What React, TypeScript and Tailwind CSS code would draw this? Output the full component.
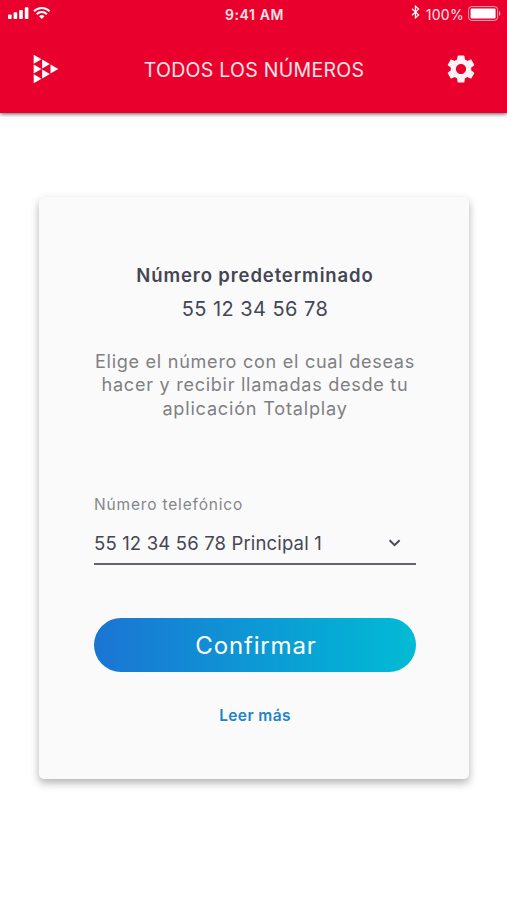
import { MdSettings } from "react-icons/md";

const DESCRIPTION = [
  { text: "Elige el número con el cual deseas", tracking: "tracking-[0.71px]" },
  { text: "hacer y recibir llamadas desde tu", tracking: "tracking-[0.71px]" },
  { text: "aplicación Totalplay", tracking: "tracking-[0.8px]" },
];

function StatusBar() {
  return (
    <div className="grid h-7 grid-cols-3 items-center pl-[8px] pr-[6px]">
      <svg width="44" height="14" viewBox="0 0 44 14" fill="#fff">
        <rect x="0" y="7.5" width="3.6" height="4.5" rx="0.8" />
        <rect x="5.6" y="5.2" width="3.6" height="6.8" rx="0.8" />
        <rect x="11.2" y="3" width="3.6" height="9" rx="0.8" />
        <rect x="16.8" y="0.3" width="3.6" height="11.7" rx="0.8" />
        <g fill="none" stroke="#fff" strokeWidth="2">
          <path d="M26 4.3a11 11 0 0 1 15.6 0" />
          <path d="M28.7 7.2a7.2 7.2 0 0 1 10.2 0" />
        </g>
        <path d="M33.8 12.1l-2.7-2.8a3.8 3.8 0 0 1 5.4 0z" />
      </svg>
      <span className="whitespace-nowrap text-center text-[14px] font-semibold tracking-[0.6px]">9:41 AM</span>
      <div className="flex items-center justify-end">
        <svg className="-mt-1" width="9" height="14" viewBox="0 0 9 15" fill="none" stroke="#fff" strokeWidth="1.4">
          <path d="M.8 4l7 6.6-3.3 3V1.4l3.3 3L.8 11" />
        </svg>
        <span className="ml-[6px] text-[14px] tracking-[0.3px]">100%</span>
        <svg className="-mt-px ml-[4px]" width="33" height="15" viewBox="0 0 33 15">
          <rect x="0.6" y="0.6" width="29" height="13.8" rx="3" fill="none" stroke="#fff" strokeOpacity="0.65" />
          <rect x="2.6" y="2.5" width="25" height="10" rx="1.2" fill="#fff" />
          <path d="M31 5c1.8.8 1.8 4.2 0 5z" fill="#fff" fillOpacity="0.65" />
        </svg>
      </div>
    </div>
  );
}

function Logo() {
  return (
    <svg width="26" height="30" viewBox="0 0 26 30" fill="#fff">
      <path d="M.7.8l7.8 4.5L.7 9.8z" />
      <path d="M.7 10.5l7.8 4.5-7.8 4.5z" />
      <path d="M.7 20.2l7.8 4.5-7.8 4.5z" />
      <path d="M9.1 5.6l7.8 4.5-7.8 4.5z" />
      <path d="M9.1 15.4l7.8 4.5-7.8 4.5z" />
      <path d="M17.5 10.5l7.8 4.5-7.8 4.5z" />
    </svg>
  );
}

export default function App() {
  return (
    <div className="flex h-[900px] w-[507px] flex-col bg-white font-['Inter',sans-serif]">
      <header className="h-[113px] bg-[#e9002c] text-white/90 shadow-[0_1px_4px_rgba(0,0,0,0.65)]">
        <StatusBar />
        <div className="mt-px flex h-20 items-center justify-between pl-[33px] pr-[29px]">
          <Logo />
          <h1 className="ml-[5px] mt-px whitespace-nowrap text-[19.5px] leading-6 tracking-[0.28px]">
            TODOS LOS NÚMEROS
          </h1>
          <MdSettings className="size-[34px] text-white/95" />
        </div>
      </header>

      <main className="ml-[39px] mt-[84px] h-[582px] w-[430px] rounded-[5px] bg-[#fafafa] pl-[55px] pr-[53px] pt-[66px] text-[#444654] shadow-[0_4px_9px_rgba(0,0,0,0.3)]">
        <h2 className="text-center text-[18.5px] font-semibold leading-6 tracking-[0.88px]">
          Número predeterminado
        </h2>
        <p className="mt-[10px] text-center text-[20px] leading-6 tracking-[0.45px]">55 12 34 56 78</p>

        <p className="mt-[29px] flex flex-col items-center whitespace-nowrap text-[18.1px] leading-[23.3px] text-[#808083]">
          {DESCRIPTION.map((line) => (
            <span key={line.text} className={line.tracking}>
              {line.text}
            </span>
          ))}
        </p>

        <label className="mt-[75px] block text-[15.5px] leading-5 tracking-[0.83px] text-[#86868a]">
          Número telefónico
        </label>
        {/* selector */}
        <button
          type="button"
          className="mt-[12px] flex h-[38px] w-full items-center justify-between border-b-2 border-[#62627c] pb-[3px] pr-[15px]"
        >
          <span className="text-[18.5px] leading-6 tracking-[0.16px]">55 12 34 56 78 Principal 1</span>
          <svg width="13" height="9" viewBox="0 0 13 9" fill="none" stroke="#484a56" strokeWidth="2">
            <path d="M1.6 1.2l5 5 5-5" />
          </svg>
        </button>

        <button
          type="button"
          className="mt-[53px] flex h-[54px] w-full items-center justify-center rounded-full bg-linear-to-r from-[#1b74d3] to-[#03bbd4] pl-[2px] pt-[3px] text-[24px] tracking-[0.85px] text-white"
        >
          Confirmar
        </button>
        <a className="mt-[34px] block text-center text-[15.5px] font-semibold leading-5 tracking-[0.4px] text-[#2084c7]">
          Leer más
        </a>
      </main>
    </div>
  );
}
